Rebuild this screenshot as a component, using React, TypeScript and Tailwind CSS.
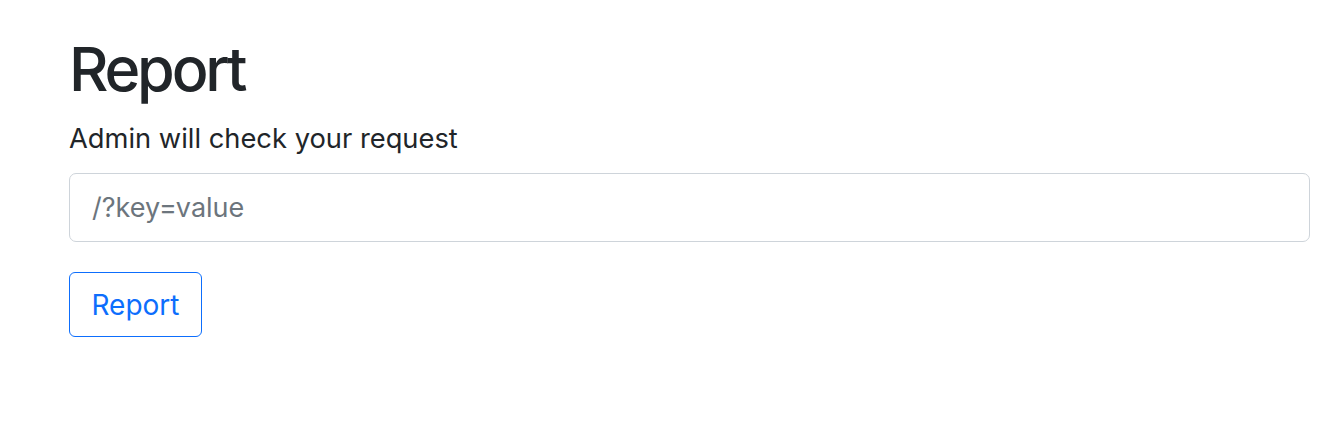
export default function App() {
  return (
    <div className="min-h-[428px] bg-white pl-[69px] pr-[24px] pt-[33px] font-['Inter',_'Liberation_Sans',_sans-serif] text-[#212529]">
      <h1 className="text-[61px] font-medium leading-[1.2] tracking-[-3.2px]">Report</h1>
      <p className="mt-[13px] text-[27.3px] leading-[1.5]">Admin will check your request</p>
      <form className="mt-[13px]" onSubmit={(e) => e.preventDefault()}>
        <input
          type="text"
          placeholder="/?key=value"
          className="block h-[69px] w-full rounded-[7px] border border-[#ced4da] bg-white px-[22px] text-[27px] text-[#212529] outline-none placeholder:text-[#6c757d]"
        />
        <button
          type="submit"
          className="mt-[30px] h-[65px] w-[133px] rounded-[6px] border border-[#0d6efd] bg-white text-[28px] text-[#0d6efd]"
        >
          Report
        </button>
      </form>
    </div>
  );
}
